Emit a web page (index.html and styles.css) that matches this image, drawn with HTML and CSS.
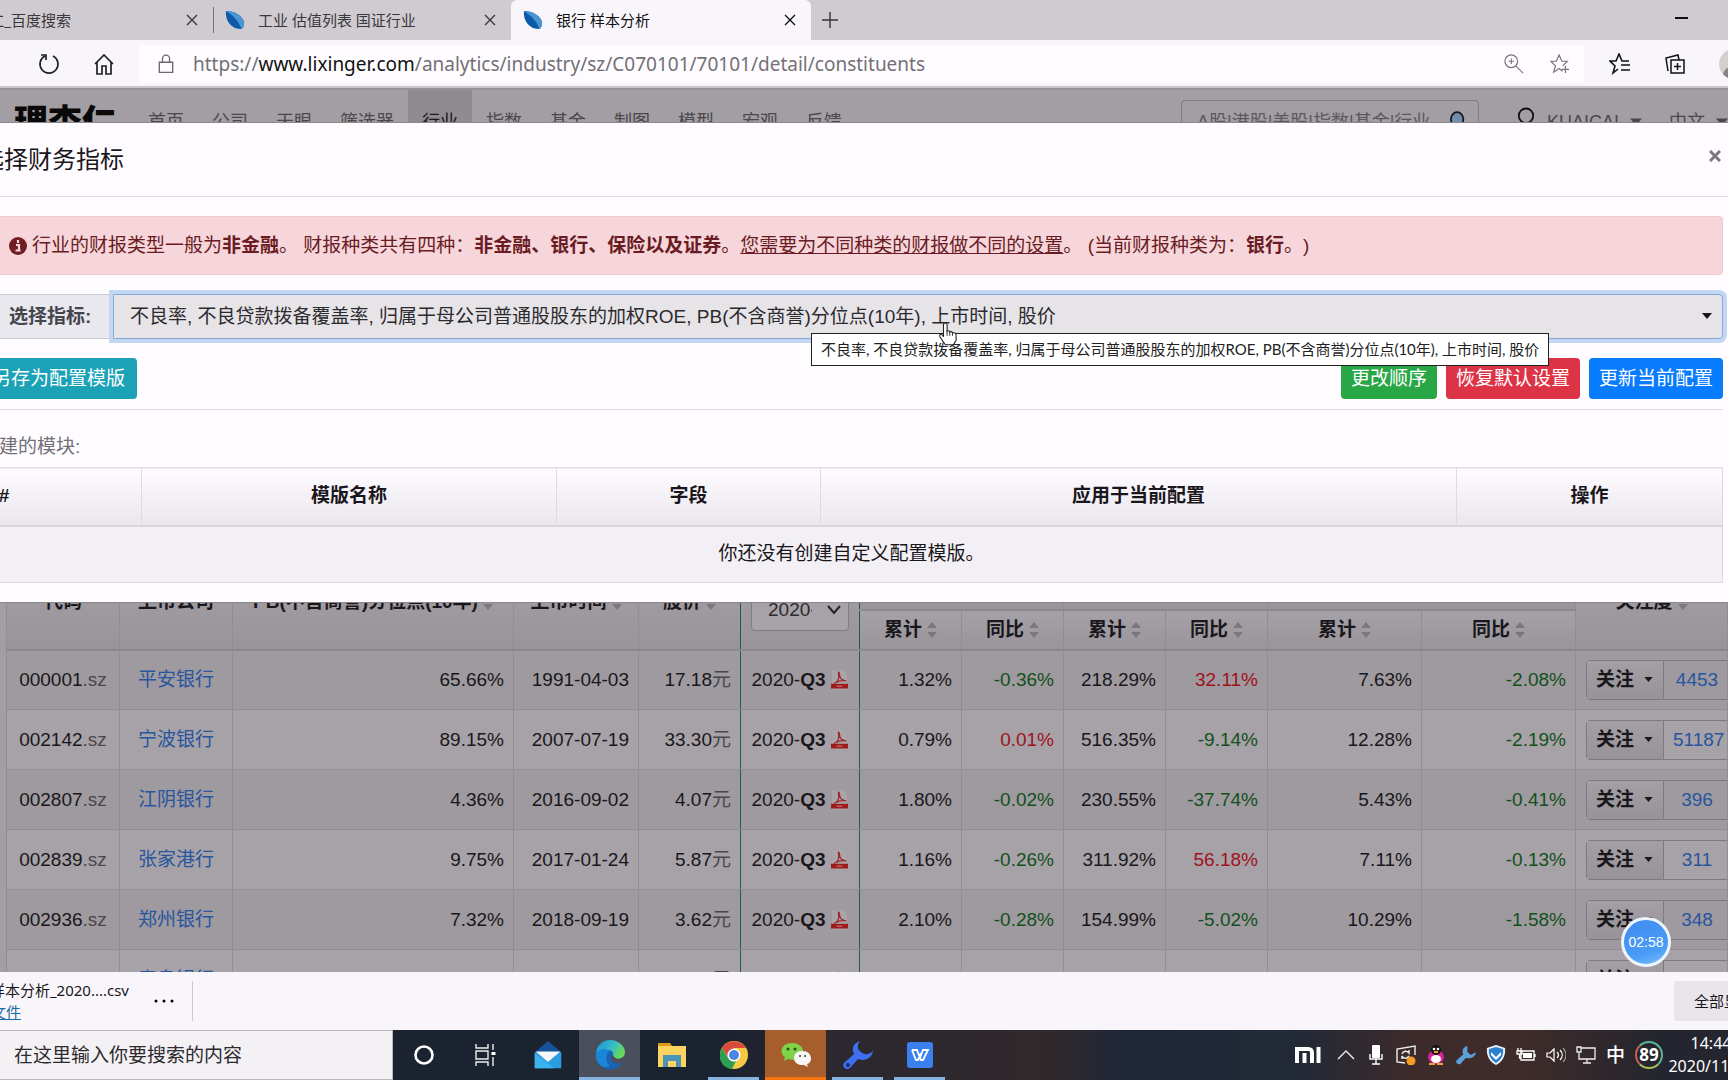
FILE: index.html
```html
<!DOCTYPE html>
<html lang="zh-CN">
<head>
<meta charset="utf-8">
<title>银行 样本分析</title>
<link rel="stylesheet" href="styles.css">
</head>
<body>
<svg class="defs" aria-hidden="true">
  <symbol id="x" viewBox="0 0 12 12"><path d="M1 1l10 10M11 1L1 11" fill="none" stroke="currentColor" stroke-width="1.4"/></symbol>
  <symbol id="leaf" viewBox="0 0 22 22"><path d="M1 1C10 1 20 6 21 14c0 3-1 6-3 7C8 21 0 13 1 1z" fill="#0f5aa8"/><path d="M1 1C10 1 20 6 21 14c0 3-1 5-3 7C16 13 9 6 1 1z" fill="#4a96d2"/></symbol>
  <symbol id="sort" viewBox="0 0 10 18"><path d="M0 7l5-6 5 6zM0 11l5 6 5-6z" fill="#7b777c"/></symbol>
  <symbol id="caret" viewBox="0 0 10 6"><path d="M0 0h10L5 6z" fill="currentColor"/></symbol>
  <symbol id="pdf" viewBox="0 0 18 20"><path d="M1 0h12l4 4v16H1z" fill="#aaa5a8"/><path d="M3 14c4-2 6-6 5-10-1-3 1-3 1 0 0 4 3 7 7 7-4-1-8 0-11 2" fill="none" stroke="#9c2a2a" stroke-width="1.3"/><path d="M0 14h18v5H0z" fill="#9c1c1c"/><path d="M6 16.500h6" stroke="#c98a8a" stroke-width="1"/></symbol>
</svg>

<header class="browser">
  <div class="tabs">
    <div class="tab tab-first"><span class="tab-title clip-start">理杏仁_百度搜索</span><button class="tab-close" aria-label="关闭"><svg><use href="#x"/></svg></button></div>
    <div class="tab tab-mid"><svg class="leaf"><use href="#leaf"/></svg><span class="tab-title">工业 估值列表 国证行业</span><button class="tab-close" aria-label="关闭"><svg><use href="#x"/></svg></button></div>
    <div class="tab tab-active"><svg class="leaf"><use href="#leaf"/></svg><span class="tab-title">银行 样本分析</span><button class="tab-close" aria-label="关闭"><svg><use href="#x"/></svg></button></div>
    <button class="new-tab" aria-label="新建标签页"><svg viewBox="0 0 18 18"><path d="M9 1v16M1 9h16" stroke="#333" stroke-width="1.400"/></svg></button>
    <button class="minimize" aria-label="最小化"></button>
  </div>
  <div class="toolbar">
    <button class="tool" aria-label="刷新"><svg viewBox="0 0 24 24"><path d="M8 4a9 9 0 1 0 8 0" fill="none" stroke="#222" stroke-width="1.700"/><path d="M4 3h5v5" fill="none" stroke="#222" stroke-width="1.700"/></svg></button>
    <button class="tool" aria-label="主页"><svg viewBox="0 0 24 24"><path d="M3 12l9-9 9 9M5 10v12h5v-8h4v8h5V10" fill="none" stroke="#222" stroke-width="1.700"/></svg></button>
    <div class="address">
      <svg class="lock" viewBox="0 0 18 22"><path d="M1.500 9h15v11.500h-15zM5 9V5a4 4 0 0 1 8 0v4" fill="none" stroke="#6b686c" stroke-width="1.500"/></svg>
      <div class="url">https://<b>www.lixinger.com</b>/analytics/industry/sz/C070101/70101/detail/constituents</div>
      <button class="mini" aria-label="缩放"><svg viewBox="0 0 22 22"><circle cx="8" cy="8" r="7" fill="none" stroke="#77747a" stroke-width="1.300"/><path d="M13 13l8 8M8 5v6M5 8h6" stroke="#77747a" stroke-width="1.300"/></svg></button>
      <button class="mini" aria-label="收藏"><svg viewBox="0 0 22 22"><path d="M14 19l-4-3-6 4 2-7-5-5h6l3-7 3 7h6l-5 5M17 13v8M13 17h8" fill="none" stroke="#77747a" stroke-width="1.300"/></svg></button>
    </div>
    <div class="tools-right">
      <button class="tool" aria-label="收藏夹"><svg viewBox="0 0 22 22"><path d="M9 16l-5 4 2-7-5-5h6l3-7 3 7h7M12 12h9M12 17h9" fill="none" stroke="#111" stroke-width="1.600"/></svg></button>
      <button class="tool" aria-label="集锦"><svg viewBox="0 0 22 22"><path d="M7 7h13v13H7zM13.500 10v7M10 13.500h7M4 18L2 5l12-3 1 5" fill="none" stroke="#111" stroke-width="1.500"/></svg></button>
      <button class="avatar" aria-label="个人资料"><svg viewBox="0 0 30 30"><circle cx="15" cy="15" r="15" fill="#d5d0ce"/><circle cx="15" cy="11" r="6" fill="#8a8482"/><path d="M4 25c2-10 20-10 22 0-5 7-17 7-22 0z" fill="#8a8482"/></svg></button>
    </div>
  </div>
</header>

<div class="viewport">
  <nav class="site-nav">
    <a class="logo" href="#">理杏仁</a>
    <a href="#">首页</a><a href="#">公司</a><a href="#">天眼</a><a href="#">筛选器</a><a class="on" href="#">行业</a><a href="#">指数</a><a href="#">基金</a><a href="#">制图</a><a href="#">模型</a><a href="#">宏观</a><a href="#">反馈</a>
    <div class="search"><input type="text" aria-label="搜索" placeholder="A股|港股|美股|指数|基金|行业"><svg viewBox="0 0 18 24"><ellipse cx="8" cy="9" rx="7" ry="8" fill="#6f8fa8" stroke="#14181c" stroke-width="2"/><path d="M12 16l5 7" stroke="#14181c" stroke-width="3"/></svg></div>
    <a class="user" href="#"><svg class="person" viewBox="0 0 20 32"><ellipse cx="10" cy="9" rx="8" ry="8" fill="none" stroke="#111" stroke-width="2"/><path d="M2 31c0-14 16-14 16 0" fill="none" stroke="#111" stroke-width="2"/></svg>KUAICAI<svg class="caret"><use href="#caret"/></svg></a>
    <a class="lang" href="#">中文<svg class="caret"><use href="#caret"/></svg></a>
  </nav>

  <main class="stocks">
    <table>
      <colgroup><col class="c-code"><col class="c-code"><col><col class="c-date"><col class="c-num"><col class="c-rep"><col class="c-num"><col class="c-num"><col class="c-num"><col class="c-num"><col class="c-wide"><col class="c-wide"><col class="c-act"></colgroup>
      <thead>
        <tr class="h1"><th rowspan="2">代码</th><th rowspan="2">上市公司</th><th rowspan="2">PB(不含商誉)分位点(10年)<svg class="sort"><use href="#sort"/></svg></th><th rowspan="2">上市时间<svg class="sort"><use href="#sort"/></svg></th><th rowspan="2" class="price">股价<svg class="sort"><use href="#sort"/></svg></th><th rowspan="2" class="rep rep-head"><div class="period"><select aria-label="财报"><option>2020-Q3</option></select><svg viewBox="0 0 14 10"><path d="M1 1l6 7 6-7" fill="none" stroke="#252226" stroke-width="2"/></svg></div></th><th colspan="2"></th><th colspan="2"></th><th colspan="2"></th><th rowspan="2">关注度<svg class="sort"><use href="#sort"/></svg></th></tr>
        <tr class="h2"><th>累计<svg class="sort"><use href="#sort"/></svg></th><th>同比<svg class="sort"><use href="#sort"/></svg></th><th>累计<svg class="sort"><use href="#sort"/></svg></th><th>同比<svg class="sort"><use href="#sort"/></svg></th><th>累计<svg class="sort"><use href="#sort"/></svg></th><th>同比<svg class="sort"><use href="#sort"/></svg></th></tr>
      </thead>
      <tbody>
        <tr><td class="mid">000001<i>.sz</i></td><td class="mid"><a href="#">平安银行</a></td><td>65.66%</td><td>1991-04-03</td><td class="price">17.18<i>元</i></td><td class="rep">2020-<b>Q3</b><svg class="pdf"><use href="#pdf"/></svg></td><td>1.32%</td><td class="dn">-0.36%</td><td>218.29%</td><td class="up">32.11%</td><td>7.63%</td><td class="dn">-2.08%</td><td class="act"><div><button>关注<svg class="caret"><use href="#caret"/></svg></button><a href="#">4453</a></div></td></tr>
        <tr><td class="mid">002142<i>.sz</i></td><td class="mid"><a href="#">宁波银行</a></td><td>89.15%</td><td>2007-07-19</td><td class="price">33.30<i>元</i></td><td class="rep">2020-<b>Q3</b><svg class="pdf"><use href="#pdf"/></svg></td><td>0.79%</td><td class="up">0.01%</td><td>516.35%</td><td class="dn">-9.14%</td><td>12.28%</td><td class="dn">-2.19%</td><td class="act"><div><button>关注<svg class="caret"><use href="#caret"/></svg></button><a href="#">51187</a></div></td></tr>
        <tr><td class="mid">002807<i>.sz</i></td><td class="mid"><a href="#">江阴银行</a></td><td>4.36%</td><td>2016-09-02</td><td class="price">4.07<i>元</i></td><td class="rep">2020-<b>Q3</b><svg class="pdf"><use href="#pdf"/></svg></td><td>1.80%</td><td class="dn">-0.02%</td><td>230.55%</td><td class="dn">-37.74%</td><td>5.43%</td><td class="dn">-0.41%</td><td class="act"><div><button>关注<svg class="caret"><use href="#caret"/></svg></button><a href="#">396</a></div></td></tr>
        <tr><td class="mid">002839<i>.sz</i></td><td class="mid"><a href="#">张家港行</a></td><td>9.75%</td><td>2017-01-24</td><td class="price">5.87<i>元</i></td><td class="rep">2020-<b>Q3</b><svg class="pdf"><use href="#pdf"/></svg></td><td>1.16%</td><td class="dn">-0.26%</td><td>311.92%</td><td class="up">56.18%</td><td>7.11%</td><td class="dn">-0.13%</td><td class="act"><div><button>关注<svg class="caret"><use href="#caret"/></svg></button><a href="#">311</a></div></td></tr>
        <tr><td class="mid">002936<i>.sz</i></td><td class="mid"><a href="#">郑州银行</a></td><td>7.32%</td><td>2018-09-19</td><td class="price">3.62<i>元</i></td><td class="rep">2020-<b>Q3</b><svg class="pdf"><use href="#pdf"/></svg></td><td>2.10%</td><td class="dn">-0.28%</td><td>154.99%</td><td class="dn">-5.02%</td><td>10.29%</td><td class="dn">-1.58%</td><td class="act"><div><button>关注<svg class="caret"><use href="#caret"/></svg></button><a href="#">348</a></div></td></tr>
        <tr><td class="mid">002948<i>.sz</i></td><td class="mid"><a href="#">青岛银行</a></td><td>9.95%</td><td>2019-01-16</td><td class="price">4.96<i>元</i></td><td class="rep">2020-<b>Q3</b><svg class="pdf"><use href="#pdf"/></svg></td><td>1.62%</td><td class="dn">-0.05%</td><td>161.79%</td><td class="up">0.69%</td><td>7.44%</td><td class="up">0.08%</td><td class="act"><div><button>关注<svg class="caret"><use href="#caret"/></svg></button><a href="#">284</a></div></td></tr>
      </tbody>
    </table>
  </main>

  <section class="modal" role="dialog" aria-labelledby="dlg">
    <div class="modal-head"><h1 id="dlg">选择财务指标</h1><button class="modal-close" aria-label="关闭"><svg viewBox="0 0 12 12"><path d="M1 1l10 10M11 1L1 11" stroke="#7c797d" stroke-width="3"/></svg></button></div>
    <div class="modal-body">
      <p class="alert"><svg viewBox="0 0 18 18"><circle cx="9" cy="9" r="9" fill="#721c24"/><path d="M9 3v3M7 8h3v5M6.500 13.500h5" stroke="#f8d7da" stroke-width="2.200" fill="none"/></svg>行业的财报类型一般为<b>非金融</b>。 财报种类共有四种：<b>非金融、银行、保险以及证券</b>。<u>您需要为不同种类的财报做不同的设置</u>。 (当前财报种类为：<b>银行</b>。)</p>
      <div class="picker">
        <label for="metrics">选择指标:</label>
        <select id="metrics"><option>不良率, 不良贷款拨备覆盖率, 归属于母公司普通股股东的加权ROE, PB(不含商誉)分位点(10年), 上市时间, 股价</option></select>
        <svg class="picker-caret"><use href="#caret"/></svg>
        <div class="tip" role="tooltip">不良率, 不良贷款拨备覆盖率, 归属于母公司普通股股东的加权ROE, PB(不含商誉)分位点(10年), 上市时间, 股价</div>
        <svg class="hand" viewBox="0 0 20 26"><path d="M5 16V3c0-3 4-3 4 0v7c1-1 3-1 3 1 1-1 3-1 3 1 2-1 4 0 4 2v6l-3 5H7L1 16c-1-3 2-4 4 0z" fill="#fff" stroke="#222" stroke-width="1.200"/><path d="M9 10v5M12 11v4M15 12v3" stroke="#222"/></svg>
      </div>
      <div class="buttons"><button class="btn teal">另存为配置模版</button><button class="btn green">更改顺序</button><button class="btn red">恢复默认设置</button><button class="btn blue">更新当前配置</button></div>
      <h2>创建的模块:</h2>
      <table class="templates">
        <colgroup><col class="t-no"><col class="t-name"><col class="t-field"><col><col class="t-op"></colgroup>
        <thead><tr><th class="no">#</th><th>模版名称</th><th>字段</th><th>应用于当前配置</th><th>操作</th></tr></thead>
        <tbody><tr><td colspan="5">你还没有创建自定义配置模版。</td></tr></tbody>
      </table>
    </div>
  </section>
  <div class="timer">02:58</div>
</div>

<section class="downloads">
  <div class="file"><span>银行_样本分析_2020....csv</span><a href="#">打开文件</a></div>
  <button class="more" aria-label="更多"><svg viewBox="0 0 20 4"><circle cx="2" cy="2" r="1.500"/><circle cx="10" cy="2" r="1.500"/><circle cx="18" cy="2" r="1.500"/></svg></button>
  <button class="show-all">全部显示</button>
</section>

<footer class="taskbar">
  <input type="text" aria-label="搜索" placeholder="在这里输入你要搜索的内容">
  <div class="apps">
    <button aria-label="Cortana"><svg viewBox="0 0 30 30"><circle cx="15" cy="15" r="8.500" fill="none" stroke="#fff" stroke-width="2.600"/></svg></button>
    <button aria-label="任务视图"><svg viewBox="0 0 30 30"><path d="M5 4v4h12V4M5 26v-4h12v4M5 11h12v8H5zM22 4v6M22 17v9" fill="none" stroke="#eee" stroke-width="1.400"/><path d="M20.500 12h4v3h-4z" fill="#fff"/></svg></button>
    <button aria-label="邮件"><svg viewBox="0 0 30 34"><path d="M0 14L15 1l15 13v6H0z" fill="#14539a"/><path d="M0 14h30v18H0z" fill="#2a9be0"/><path d="M1 13h28L15 25z" fill="#f4f8fb"/><path d="M0 32V15l22 17z" fill="#3bb4ee"/></svg></button>
    <button class="run focus" aria-label="Edge"><svg viewBox="0 0 30 30"><defs><linearGradient id="eg" x2="1" y2=".4"><stop stop-color="#1d8fd8"/><stop offset=".6" stop-color="#35bdc8"/><stop offset="1" stop-color="#67d95a"/></linearGradient></defs><circle cx="15" cy="15" r="14.500" fill="#1764b5"/><path d="M1 13C2 5 8 0 15 0c8 0 15 6 15 12 0 5-4 8-9 7-3 0-4-2-3-4 1-3-2-5-5-5-5 0-10 1-12 3z" fill="url(#eg)"/><path d="M1 14c3-6 11-6 14-3-5 3-5 11 0 15-8 4-15-4-14-12z" fill="#1c86d6"/><path d="M18 15c-5 4 0 10 9 8l3-2v-6c-4 5-10 5-12 0z" fill="#4b4f5c"/></svg></button>
    <button aria-label="文件资源管理器"><svg viewBox="0 0 30 30"><path d="M1 3h12l2 3h-14z" fill="#d99a19"/><path d="M1 6h28v21H1z" fill="#fbd45f"/><path d="M6 27V15h18v12h-5v-6h-8v6z" fill="#4d93b5"/></svg></button>
    <button class="run" aria-label="Chrome"><svg viewBox="0 0 30 30"><circle cx="15" cy="15" r="14" fill="#f6c945"/><path d="M3 8A14 14 0 0 1 27 8H15L9 17z" fill="#d94a3d"/><path d="M3 8l6 10c2 3 5 4 8 3l-4 8C2 28-2 17 3 8z" fill="#2f9e55"/><circle cx="15" cy="15" r="6.500" fill="#fff"/><circle cx="15" cy="15" r="5" fill="#4a86e8"/></svg></button>
    <button class="wechat" aria-label="微信"><svg viewBox="0 0 30 30"><path d="M11 3c14 0 15 16 2 17l-6-1-4 2 1-4C-3 12 1 3 11 3z" fill="#7ed348"/><path d="M21 11c11 0 11 12 5 13l1 3-4-2c-13 1-13-14-2-14z" fill="#f7f7f7"/><g fill="#2a4a1c"><circle cx="7" cy="9" r="1.500"/><circle cx="14" cy="9" r="1.500"/><circle cx="19" cy="16" r="1"/><circle cx="24" cy="16" r="1"/></g></svg></button>
    <button class="run" aria-label="工具"><svg viewBox="0 0 30 30"><path d="M17 1c-6 2-9 7-6 13L1 23c-3 4 3 8 6 5l8-9c7 3 14-1 15-8-4 4-9 4-12 1-4-3-4-7-1-11z" fill="#3d6fee"/><circle cx="5" cy="25" r="2" fill="#1a2a6a"/></svg></button>
    <button class="run" aria-label="WPS"><svg viewBox="0 0 30 30"><rect x="2" y="2" width="26" height="26" rx="3" fill="#3a80ef"/><path d="M7 10h5l3 8 3-8h5l-5 10h-2l-4-10M7 10l4 10h2l3-7" fill="none" stroke="#fff" stroke-width="1.800"/></svg></button>
  </div>
  <div class="tray">
    <svg class="mi" viewBox="0 0 26 16"><path d="M2 16V2h11c3 0 4 1 4 4v10M9.500 6v10M23.500 0v16" fill="none" stroke="#fff" stroke-width="4"/></svg>
    <svg viewBox="0 0 20 20"><path d="M2 14l8-8 8 8" fill="none" stroke="#eee" stroke-width="1.400"/></svg>
    <svg viewBox="0 0 20 20"><rect x="6" y="0" width="8" height="13" rx="1" fill="#fff"/><path d="M4 9v5h12V9M10 14v5M6 19h8" fill="none" stroke="#fff" stroke-width="1.400"/></svg>
    <svg viewBox="0 0 20 20"><path d="M9 18l-8-1V4l18-3v9M6 9c1-3 5-4 7-1V5M13 11c-2 3-6 3-7 0v3" fill="none" stroke="#eee" stroke-width="1.400"/><circle cx="15" cy="16" r="4.500" fill="#f59a23"/></svg>
    <svg viewBox="0 0 20 20"><ellipse cx="10" cy="12" rx="8" ry="7" fill="#d6249a"/><circle cx="10" cy="5" r="5" fill="#161216"/><circle cx="8" cy="4" r="1.300" fill="#fff"/><circle cx="12" cy="4" r="1.300" fill="#fff"/><path d="M8 7h4" stroke="#f3a12c" stroke-width="2"/><ellipse cx="10" cy="14" rx="5" ry="4" fill="#fff"/><path d="M3 19h6M11 19h6" stroke="#f3a12c" stroke-width="2"/></svg>
    <svg viewBox="0 0 30 30"><path d="M17 1c-6 2-9 7-6 13L1 23c-3 4 3 8 6 5l8-9c7 3 14-1 15-8l-8 4-5-5z" fill="#5ca0dc"/></svg>
    <svg viewBox="0 0 20 20"><path d="M10 0l9 3c1 8-3 14-9 17C4 17 0 11 1 3z" fill="#eaf3fb"/><path d="M10 2l7 2c1 6-2 11-7 14C5 15 2 10 3 4z" fill="#2f7fd0"/><path d="M5 7l5 5 5-5v3l-5 5-5-5z" fill="#fff"/></svg>
    <svg viewBox="0 0 20 20"><path d="M5 6h13v9H5zM19 9v3M1 6h5v3H1zM2 3v3M5 3v3M3.500 9v4h2" fill="none" stroke="#fff" stroke-width="1.300"/><path d="M7 8h9v5H7z" fill="#fff"/></svg>
    <svg viewBox="0 0 20 20"><path d="M1 8h3l4-4v12l-4-4H1zM11 7c2 2 2 4 0 6M14 5c3 3 3 7 0 10" fill="none" stroke="#fff" stroke-width="1.200"/><path d="M17 3c4 4 4 10 0 14" fill="none" stroke="#999" stroke-width="1.200"/></svg>
    <svg viewBox="0 0 20 20"><path d="M5 3h14v11H3V8M11 14v4M7 18h8M1 2h4v5H1z" fill="none" stroke="#eee" stroke-width="1.300"/></svg>
    <span class="ime">中</span>
    <span class="score">89</span>
    <time class="clock"><span>14:44</span><span>2020/11/14</span></time>
  </div>
</footer>
</body>
</html>
```
FILE: styles.css
```css
* { box-sizing: border-box; }
html, body { height: 100%; }
body {
  margin: 0;
  display: flex;
  flex-direction: column;
  overflow: hidden;
  background: #f9f6fb;
  color: #1a171c;
  font: 19px/28px "Liberation Sans", "Noto Sans CJK SC", sans-serif;
  text-spacing-trim: space-all;
}
button { margin: 0; padding: 0; border: 0; background: none; font: inherit; color: inherit; }
a { color: inherit; text-decoration: none; }
svg { flex: none; }
.defs { display: none; }

/* Browser chrome */
.tabs, .toolbar, .url, .downloads, .taskbar { font-family: "Noto Sans", "Noto Sans CJK SC", sans-serif; }
.tabs { display: flex; height: 40px; background: #d0cbd1; font-size: 15px; line-height: 38px; }
.tab { display: flex; align-items: center; padding-right: 15px; white-space: nowrap; color: #3a373b; }
.tab-first { width: 213px; }
.tab-mid { width: 298px; padding-left: 12px; }
.tab-mid::before { content: ""; width: 1px; height: 26px; margin: 0 11px 0 -12px; background: #77737a; }
.tab-active { width: 300px; padding-left: 12px; background: #f9f6fb; border-radius: 6px 6px 0 0; color: #111; }
.leaf { width: 20px; height: 22px; margin-right: 13px; }
.clip-start { display: flex; justify-content: flex-end; width: 71px; overflow: hidden; }
.tab-close { width: 12px; height: 40px; margin-left: auto; }
.tab-close svg { display: block; width: 12px; height: 12px; margin: 14px 0; }
.new-tab { width: 38px; height: 40px; display: grid; place-items: center; }
.new-tab svg { width: 18px; height: 18px; }
.minimize { width: 13px; height: 2px; margin: 17px 40px 0 auto; background: #111; }
.toolbar { display: flex; align-items: center; height: 48px; padding: 2px 0 0 37px; border-bottom: 2px solid #c8c4c9; overflow: hidden; }
.tool { width: 24px; height: 24px; margin-right: 31px; }
.tool svg, .avatar svg, .mini svg { display: block; width: 100%; height: 100%; }
.tools-right { display: flex; align-items: center; gap: 33px; margin: 0 -21px 0 25px; }
.tools-right .tool { width: 22px; height: 22px; margin: 0; }
.avatar { width: 30px; height: 30px; }
.address { flex: 1; display: flex; align-items: center; height: 38px; margin-left: -8px; padding: 0 14px 0 19px; background: #fefcff; border-radius: 4px; }
.lock { width: 16px; height: 22px; margin-right: 19px; }
.url { flex: 1; font-size: 19px; color: #737076; white-space: nowrap; }
.url b { font-weight: 400; color: #111; }
.mini { width: 20px; height: 20px; margin-left: 26px; }

/* Dimmed page behind the dialog */
.viewport { position: relative; flex: 1; min-height: 0; overflow: hidden; background: #a29ea3; }
.site-nav { display: flex; align-items: center; height: 65px; padding-left: 14px; color: #4b484d; font-size: 18px; white-space: nowrap; border-top: 2px solid #969298; }
.site-nav > a { height: 63px; padding: 0 14px; line-height: 64px; }
.site-nav .logo { padding: 0 18px 0 0; font-size: 34px; font-weight: 900; color: #0a090a; }
.site-nav .on { background: #8f8b90; color: #1a181b; }
.search { display: flex; align-items: center; width: 298px; height: 44px; margin: 0 38px 0 auto; padding: 0 12px 0 15px; border: 1px solid #807c81; border-radius: 4px; }
.search input { flex: 1; min-width: 0; padding: 0; border: 0; background: none; font: inherit; outline: 0; }
.search input::placeholder { color: #5c585d; opacity: 1; }
.search svg { width: 16px; height: 24px; }
.site-nav .user, .site-nav .lang { display: flex; align-items: center; padding: 0; }
.person { width: 18px; height: 30px; margin-right: 12px; }
.site-nav .caret { width: 12px; height: 8px; margin-left: 11px; }
.site-nav .lang { margin-left: 27px; }
.stocks { padding: 398px 0 0 6px; }
.stocks table { width: 100%; table-layout: fixed; border-collapse: collapse; white-space: nowrap; }
.c-code { width: 113px; }
.c-date { width: 125px; }
.c-num { width: 102px; }
.c-rep { width: 119px; }
.c-wide { width: 154px; }
.c-act { width: 152px; }
.h1 { height: 58px; }
.h2 { height: 40px; }
.stocks th { padding: 0; border: 1px solid #918d92; border-bottom: 2px solid #8c888d; background: linear-gradient(#a5a1a6, #98949a); }
.stocks .h1 th { padding-top: 3px; }
.sort { width: 10px; height: 18px; margin-left: 5px; vertical-align: -3px; }
.stocks td { height: 60px; padding: 0 9px; border: 1px solid #918d92; text-align: right; }
.stocks tbody tr:nth-child(odd) { background: #9e9a9f; }
.stocks tbody tr:nth-child(even) { background: #a6a2a7; }
.stocks td.mid { padding: 0; text-align: center; }
.stocks td i { font-style: normal; color: #4a474b; }
.stocks td a { color: #27559f; }
.stocks .price { border-right-color: #1f5c4d; }
.stocks .rep { padding: 0; text-align: center; border-left: 1px solid #1f5c4d; border-right: 1px solid #1f5c4d; }
.stocks .h1 .rep-head { padding: 0 10px 18px; vertical-align: bottom; }
.period { position: relative; }
.period select { display: block; width: 100%; height: 42px; padding: 0 36px 0 16px; border: 1px solid #807c81; border-radius: 4px; background: #a6a2a7; appearance: none; font: inherit; font-weight: 400; color: #2d2a2e; }
.period svg { position: absolute; right: 8px; top: 16px; width: 14px; height: 10px; }
.pdf { width: 17px; height: 20px; margin-left: 6px; vertical-align: -4px; }
.stocks .dn { color: #14501c; }
.stocks .up { color: #a0121d; }
.stocks td.act { padding: 0 0 0 10px; }
.act div { display: flex; width: max-content; height: 40px; border: 1px solid #7d797e; border-radius: 4px; line-height: 38px; text-align: center; }
.act button { display: flex; align-items: center; width: 77px; padding-left: 9px; border-right: 1px solid #7d797e; background: linear-gradient(#a39fa4, #979398); font-weight: 700; }
.act .caret { width: 9px; height: 5px; margin-left: 10px; }
.act a { min-width: 66px; padding: 0 9px; }

/* Dialog */
.modal { position: absolute; top: 34px; left: -40px; right: -15px; background: #fefcff; border: 1px solid #8b878c; }
.modal-head { display: flex; align-items: center; justify-content: space-between; height: 74px; padding: 0 21px 0 19px; border-bottom: 1px solid #dedbe0; }
.modal-head h1 { margin: 0; font-size: 24px; font-weight: 400; line-height: 32px; }
.modal-close { margin-bottom: 8px; }
.modal-close svg { display: block; width: 12px; height: 12px; }
.modal-body { padding: 19px 19px; }
.alert { display: flex; align-items: center; height: 59px; margin: 0 0 19px; padding: 0 0 0 28px; border: 1px solid #f0c8cd; border-radius: 4px; background: #f6d6da; color: #6a1b23; white-space: pre; }
.alert svg { width: 18px; height: 18px; margin-right: 5px; }
.picker { position: relative; display: flex; height: 45px; margin-bottom: 19px; }
.picker label { width: 133px; padding: 0 0 0 28px; border: 1px solid #ccc9d0; background: #e9e8ee; color: #45464d; font-weight: 700; line-height: 43px; }
.picker select { flex: 1; min-width: 0; padding: 0 30px 0 16px; border: 1px solid #86a9d6; border-radius: 0 4px 4px 0; background: #e7e4e8; box-shadow: 0 0 0 4px #c3d7f2; appearance: none; font: inherit; color: #2c2a2f; outline: 0; }
.picker-caret { position: absolute; right: 11px; top: 19px; width: 10px; height: 6px; }
.tip { position: absolute; left: 831px; top: 39px; height: 33px; padding: 0 9px; border: 1px solid #222; background: #fff; color: #222; font-family: Lato, "Noto Sans CJK SC", sans-serif; font-size: 15px; line-height: 30px; white-space: nowrap; }
.hand { position: absolute; left: 959px; top: 28px; width: 18px; height: 24px; }
.buttons { display: flex; gap: 9px; padding-bottom: 10px; border-bottom: 1px solid #dedbe0; }
.btn { height: 41px; padding: 0 10px; border-radius: 4px; color: #fff; }
.teal { margin-right: auto; padding: 0 12px; background: #1ba2b6; }
.green { background: #29a746; }
.red { background: #dc3446; }
.blue { background: #087bfe; }
.modal-body h2 { margin: 23px 0 6px; font-size: 19px; font-weight: 400; line-height: 28px; color: #737076; }
.templates { width: 100%; table-layout: fixed; border-collapse: collapse; text-align: center; }
.templates th { height: 58px; padding: 0; border: 1px solid #dedae0; border-bottom: 2px solid #dad6dc; background: linear-gradient(#fefcff, #eae6ed); }
.templates td { height: 57px; padding: 0; border: 1px solid #dedae0; background: #f3f0f5; }
.templates .no { padding-right: 114px; }
.t-no { width: 161px; }
.t-name { width: 415px; }
.t-field { width: 264px; }
.t-op { width: 266px; }
.timer { position: absolute; right: 57px; bottom: 5px; width: 50px; height: 50px; border: 3px solid #eef5fd; border-radius: 50%; background: linear-gradient(160deg, #3f8cf0, #4a9cf6 70%, #7cc4fb); color: #fff; font-size: 14px; line-height: 44px; text-align: center; }

/* Download shelf */
.downloads { display: flex; align-items: center; height: 58px; font-size: 15px; line-height: 22px; overflow: hidden; }
.file { display: flex; flex-direction: column; width: 129px; align-items: flex-end; white-space: nowrap; }
.file a { align-self: flex-start; display: flex; justify-content: flex-end; width: 21px; color: #2069a8; text-decoration: underline; }
.more { width: 64px; height: 40px; padding-left: 25px; border-right: 1px solid #cbc7cd; }
.more svg { display: block; width: 20px; height: 4px; }
.show-all { width: 100px; height: 40px; margin: 0 -46px 0 auto; padding-left: 20px; border-radius: 2px; background: #e9e5ea; text-align: left; }

/* Taskbar */
.taskbar { display: flex; height: 50px; background: linear-gradient(90deg, #1b2230 0 42%, #2b2830 47%, #30292c 61%, #1e2738 65%, #222936 75%, #3d2b2b 82%, #3f2c2a 88%, #24252e 96%); color: #fff; overflow: hidden; }
.taskbar input { width: 393px; padding: 0 14px; border: 1px solid #b9b6bb; border-left: 0; border-radius: 0; background: #f4f1f5; font: inherit; }
.taskbar input::placeholder { color: #2c2a2e; opacity: 1; }
.apps { display: flex; gap: 1px; }
.apps button { width: 61px; padding: 0 5px; }
.apps svg { display: block; width: 30px; height: 30px; margin: 0 auto; }
.apps .run { background: linear-gradient(#86b2e0, #86b2e0) center bottom / 51px 3px no-repeat; }
.apps .run.focus { background: linear-gradient(#86b2e0, #86b2e0) bottom / 100% 3px no-repeat, #4b4f5c; }
.apps .wechat { background: #a65f2c; border-bottom: 3px solid #f8740e; padding-top: 3px; }
.tray { display: flex; align-items: center; gap: 10px; margin-left: auto; margin-right: -27px; }
.tray svg { width: 20px; height: 20px; }
.tray .mi { width: 26px; height: 16px; margin-right: 5px; }
.ime { font-size: 19px; font-weight: 500; }
.score { width: 28px; height: 28px; border: 2px solid #5bb39a; border-left-color: #c95f4a; border-bottom-color: #a8bf58; border-radius: 50%; font-size: 17px; font-weight: 700; line-height: 24px; text-align: center; }
.clock { display: flex; flex-direction: column; align-items: center; width: 88px; margin-left: -6px; font-size: 16px; line-height: 23px; }
```
